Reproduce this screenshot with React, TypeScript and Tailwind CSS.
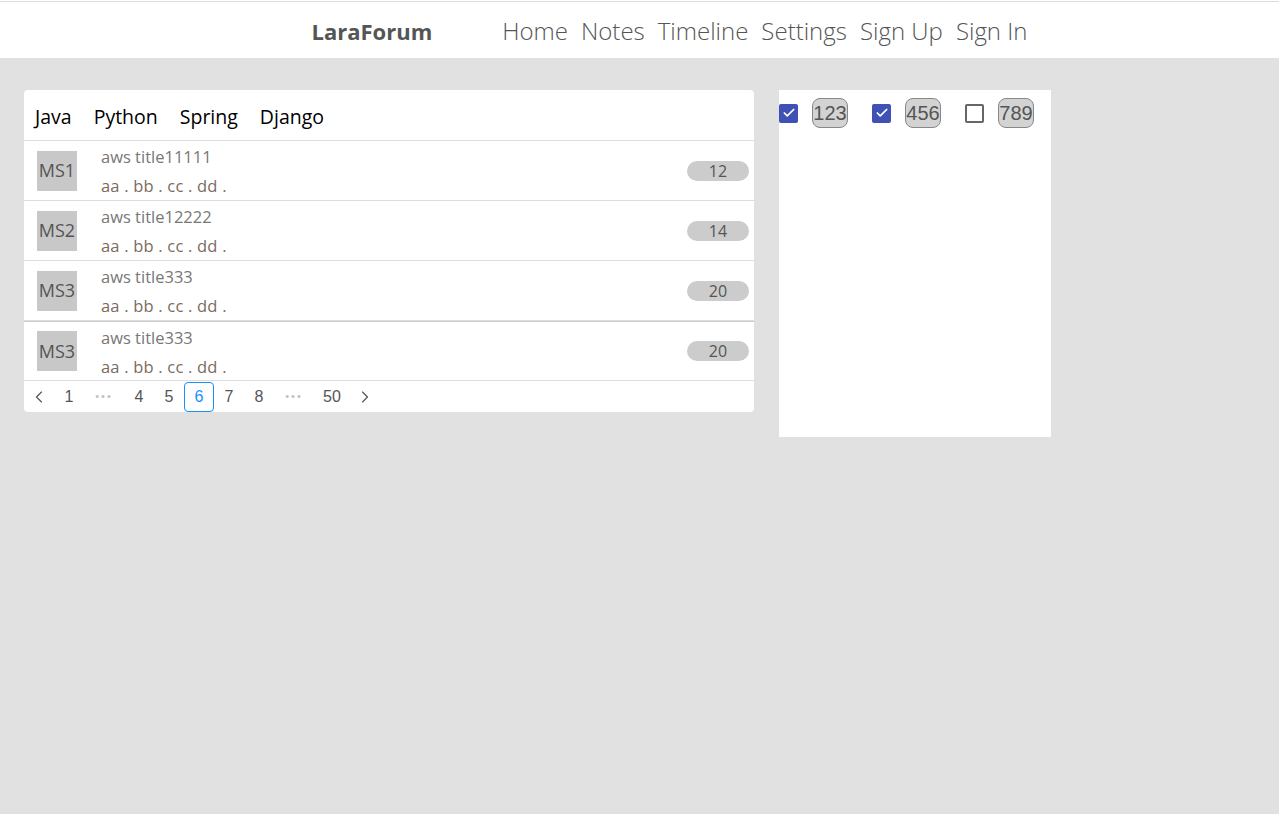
import { Check, ChevronLeft, ChevronRight } from "lucide-react";

const navItems = ["Home", "Notes", "Timeline", "Settings", "Sign Up", "Sign In"];
const tabs = ["Java", "Python", "Spring", "Django"];

const posts = [
	{ id: 1, avatar: "MS1", title: "aws title11111", count: 12 },
	{ id: 2, avatar: "MS2", title: "aws title12222", count: 14 },
	{ id: 3, avatar: "MS3", title: "aws title333", count: 20 },
	{ id: 4, avatar: "MS3", title: "aws title333", count: 20 },
];

const tags = [
	{ label: "123", checked: true },
	{ label: "456", checked: true },
	{ label: "789", checked: false },
];

const Header = () => (
	<header className="h-[57px] bg-white border-t border-t-[#dcdcdc] mt-px flex items-center justify-center pl-[60px] pt-[2px]">
		<span className="text-[22px] font-bold text-[#555]">LaraForum</span>
		<nav className="ml-[70px] flex items-center gap-x-[13px]">
			{navItems.map((item) => (
				<a key={item} className="text-[24px] font-light text-[#555] cursor-pointer">
					{item}
				</a>
			))}
		</nav>
	</header>
);

const Pagination = () => (
	<div className="h-[31px] flex items-center text-[16px] text-[#555] font-['Liberation_Sans',sans-serif]">
		<span className="w-[30px] flex justify-center">
			<ChevronLeft size={20} strokeWidth={1.4} />
		</span>
		<span className="w-[30px] text-center">1</span>
		<span className="w-[40px] text-center text-[#c0c0c0] text-[11px] tracking-[2px]">•••</span>
		<span className="w-[30px] text-center">4</span>
		<span className="w-[30px] text-center">5</span>
		<span className="w-[30px] h-[30px] flex items-center justify-center border border-[#1890ff] rounded text-[#1890ff]">
			6
		</span>
		<span className="w-[30px] text-center">7</span>
		<span className="w-[30px] text-center">8</span>
		<span className="w-[40px] text-center text-[#c0c0c0] text-[11px] tracking-[2px]">•••</span>
		<span className="w-[36px] text-center">50</span>
		<span className="w-[30px] flex justify-center">
			<ChevronRight size={20} strokeWidth={1.4} />
		</span>
	</div>
);

const App = () => {
	return (
		<div className="min-h-[814px] bg-[#e1e1e1] font-['Open_Sans',sans-serif]">
			<Header />
			<main className="flex items-start gap-x-[25px] pt-[32px] pl-[24px]">
				<section className="w-[730px] bg-white rounded">
					<div className="h-[51px] flex items-center gap-x-[22px] pl-[11px] pt-[3px] border-b border-b-[#ddd]">
						{tabs.map((tab) => (
							<span key={tab} className="text-[19.5px] text-black">
								{tab}
							</span>
						))}
					</div>
					{posts.map((post, index) => (
						<div
							key={post.id}
							className={`h-[60px] flex items-center border-b border-b-[#ddd] ${index === 3 ? "border-t border-t-[#ccc]" : ""}`}
						>
							<div className="ml-[13px] w-[40px] h-[40px] bg-[#c8c8c8] flex items-center justify-center text-[18px] text-[#555]">
								{post.avatar}
							</div>
							<div className="ml-[24px] flex-1 self-stretch flex flex-col pt-[2px]">
								<span className="text-[16.5px] leading-[28px] text-[#777]">{post.title}</span>
								<span className="text-[16.5px] leading-[30px] tracking-[0.2px] text-[#7a6b5d]">aa . bb . cc . dd .</span>
							</div>
							<span className="mr-[5px] w-[62px] h-[20px] rounded-full bg-[#ccc] flex items-center justify-center text-[16px] text-[#555]">
								{post.count}
							</span>
						</div>
					))}
					<Pagination />
				</section>
				<aside className="w-[272px] h-[347px] bg-white pt-[8px] flex items-start gap-x-[24px] font-['Liberation_Sans',sans-serif]">
					{tags.map((tag) => (
						<div key={tag.label} className="flex items-center gap-x-[14px]">
							{tag.checked ? (
								<span className="w-[19px] h-[19px] rounded-[2px] bg-[#3f51b5] flex items-center justify-center">
									<Check size={14} color="#fff" strokeWidth={3} />
								</span>
							) : (
								<span className="w-[19px] h-[19px] rounded-[2px] border-2 border-[#666] bg-white" />
							)}
							<span className="w-[36px] h-[30px] rounded-lg border border-[#888] bg-[#d3d3d3] flex items-center justify-center text-[20px] text-[#555]">
								{tag.label}
							</span>
						</div>
					))}
				</aside>
			</main>
		</div>
	);
};

export default App;
